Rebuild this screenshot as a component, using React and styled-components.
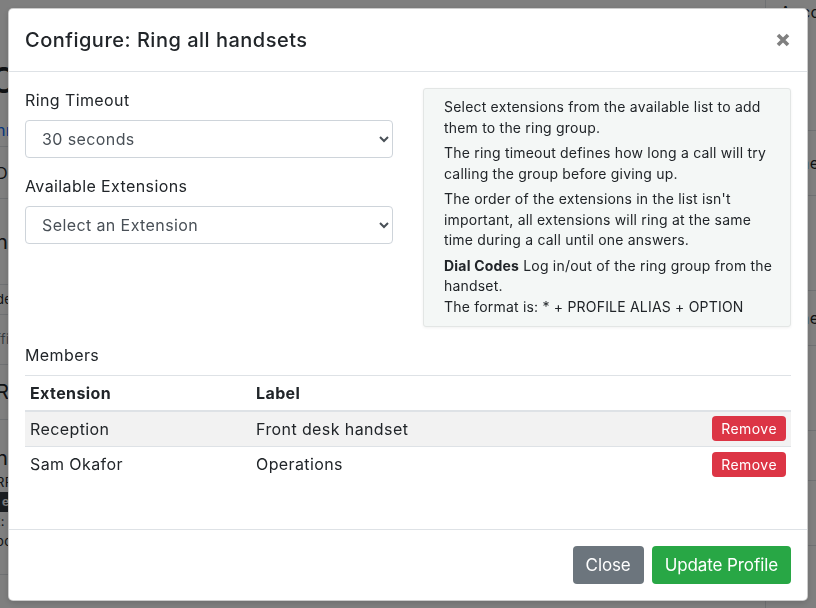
import React from "react";
import styled, { createGlobalStyle } from "styled-components";

const GlobalStyle = createGlobalStyle`
  html, body { margin: 0; padding: 0; }
  body {
    font-family: Inter, "Open Sans", "Liberation Sans", sans-serif;
    color: #212529;
    background: #fff;
    letter-spacing: 0.4px;
  }
  * { box-sizing: border-box; }
`;

/* ---------- background page ---------- */
const Page = styled.div`
  width: 816px;
  height: 608px;
  overflow: hidden;
  display: grid;
  grid-template-columns: 765px 1fr;
  background: #fff;
`;

const MainCol = styled.div`
  overflow: hidden;
  white-space: nowrap;
  padding-top: 58px;
  margin-left: -10px;
`;

const SideCol = styled.div`
  overflow: hidden;
  white-space: nowrap;
  border-left: 1px solid #dee2e6;
  padding-left: 10px;
`;

const BigHeading = styled.div`
  font-size: 36px;
  font-weight: 500;
  line-height: 44px;
  color: #212529;
`;

const PageLink = styled.div`
  color: #0d6efd;
  font-size: 16px;
  line-height: 24px;
  margin-top: 16px;
  margin-left: 6px;
`;

const PageRow = styled.div`
  border-top: 1px solid #dee2e6;
  display: flex;
  flex-direction: column;
  justify-content: center;
  height: ${(p) => p.$h}px;
  font-size: ${(p) => p.$size || 16}px;
  color: ${(p) => (p.$muted ? "#6c757d" : "#212529")};
  padding-left: ${(p) => p.$indent ?? 6}px;
  line-height: 1.5;
`;

const Badge = styled.span`
  display: inline-block;
  background: #343a40;
  color: #fff;
  font-size: 12px;
  font-weight: 700;
  padding: 1px 6px;
  border-radius: 3px;
  width: max-content;
`;

const TopLink = styled.div`
  display: flex;
  align-items: center;
  gap: 4px;
  height: 24px;
  font-size: 16px;
  color: #212529;
`;

/* ---------- modal ---------- */
const Backdrop = styled.div`
  position: fixed;
  inset: 0;
  background: rgba(0, 0, 0, 0.5);
`;

const ModalLayer = styled.div`
  position: fixed;
  inset: 0;
  display: flex;
  justify-content: center;
  align-items: flex-start;
  padding-top: 8px;
`;

const Modal = styled.div`
  width: 800px;
  background: #fff;
  border: 1px solid rgba(0, 0, 0, 0.2);
  border-radius: 5px;
  display: flex;
  flex-direction: column;
  box-shadow: 0 2px 6px rgba(0, 0, 0, 0.15);
`;

const Header = styled.div`
  display: flex;
  align-items: center;
  justify-content: space-between;
  padding: 16px;
  border-bottom: 1px solid #dee2e6;
`;

const Title = styled.h5`
  margin: 0;
  font-size: 20px;
  font-weight: 500;
  line-height: 30px;
  letter-spacing: 0.5px;
  color: #212529;
`;

const CloseX = styled.button`
  border: 0;
  background: none;
  padding: 0;
  margin-right: 1px;
  display: flex;
  color: #808080;
  cursor: pointer;
`;

const Body = styled.div`
  padding: 16px 16px 47px;
`;

const Columns = styled.div`
  display: grid;
  grid-template-columns: 1fr 1fr;
  column-gap: 30px;
`;

const FormGroup = styled.div`
  margin-bottom: 16px;
`;

const Label = styled.label`
  display: block;
  font-size: 16px;
  line-height: 24px;
  margin-bottom: 8px;
  color: #212529;
`;

const Select = styled.select`
  width: 100%;
  height: 38px;
  padding: 6px 8px 6px 12px;
  font-family: inherit;
  letter-spacing: 0.4px;
  font-size: 16px;
  color: #495057;
  background: #fff;
  border: 1px solid #ced4da;
  border-radius: 4px;
`;

const Help = styled.div`
  background: #f4f7f6;
  border: 1px solid #e3e6e5;
  border-radius: 3px;
  box-shadow: 0 1px 3px rgba(0, 0, 0, 0.06);
  padding: 8px 10px 9px 20px;
  font-size: 14px;
  line-height: 20.5px;
  letter-spacing: 0.2px;
  margin-bottom: 16px;
  color: #212529;
  p { margin: 0 0 5px; }
  p:last-child { margin-bottom: 0; }
`;

const SectionLabel = styled.div`
  font-size: 16px;
  line-height: 24px;
  margin-bottom: 8px;
`;

const Table = styled.table`
  width: 100%;
  border-collapse: collapse;
  font-size: 16px;
  line-height: 24px;
  th, td {
    padding: 4.8px 5px;
    border-top: 1px solid #dee2e6;
    text-align: left;
    vertical-align: middle;
  }
  th { font-weight: 700; border-bottom: 2px solid #dee2e6; }
`;

const Tr = styled.tr`
  background: ${(p) => (p.$striped ? "#f2f2f2" : "transparent")};
`;

const ActionCell = styled.td`
  text-align: right !important;
  width: 90px;
`;

const Btn = styled.button`
  font-family: inherit;
  border: 1px solid transparent;
  border-radius: 4px;
  color: #fff;
  cursor: pointer;
  background: ${(p) => p.$bg};
  font-size: ${(p) => (p.$small ? 14 : 17)}px;
  line-height: ${(p) => (p.$small ? 17 : 24)}px;
  letter-spacing: ${(p) => (p.$small ? 0.45 : -0.1)}px;
  padding: ${(p) => (p.$small ? "3px 8px" : "6px 12px")};
`;

const Footer = styled.div`
  display: flex;
  justify-content: flex-end;
  gap: 8px;
  padding: 16px 16px 16px;
  border-top: 1px solid #dee2e6;
`;

function XIcon() {
  return (
    <svg width="14" height="14" viewBox="0 0 14 14">
      <path
        d="M2 2 L12 12 M12 2 L2 12"
        stroke="currentColor"
        strokeWidth="3.6"
        strokeLinecap="butt"
      />
    </svg>
  );
}

function ChartIcon() {
  return (
    <svg width="13" height="12" viewBox="0 0 13 12">
      <path d="M1 0 V11 H13" stroke="#343a40" strokeWidth="2" fill="none" />
      <path d="M3 10 V5 L6 7 L9 2 L12 4 V10 Z" fill="#343a40" />
    </svg>
  );
}

const members = [
  { ext: "Reception", label: "Front desk handset" },
  { ext: "Sam Okafor", label: "Operations" },
];

export default function App() {
  return (
    <>
      <GlobalStyle />
      <Page>
        <MainCol>
          <BigHeading>OO Ring Groups</BigHeading>
          <PageLink>nmanage profiles</PageLink>
          <PageRow $h={52} style={{ marginTop: 4 }}>DDial plan</PageRow>
          <PageRow $h={86} $size={20}>hhandsets</PageRow>
          <PageRow $h={30} $size={13}>dedefault</PageRow>
          <PageRow $h={50} $size={13} $muted>ffirmware</PageRow>
          <PageRow $h={55} $size={20}>RReception</PageRow>
          <PageRow $h={155} $size={13}>
            <span style={{ fontSize: 20 }}>hhunt</span>
            <span>RRing all</span>
            <Badge>ecec</Badge>
            <span>t: timeout</span>
            <span>oon</span>
          </PageRow>
          <PageRow $h={40} />
        </MainCol>
        <SideCol>
          <TopLink>
            <ChartIcon />
            Account
          </TopLink>
          <PageRow $h={106} style={{ border: 0 }} />
          <PageRow $h={65} $indent={0}>name</PageRow>
          <PageRow $h={95} $indent={0}>
            <span>fo</span>
            <span style={{ fontSize: 13 }}>time</span>
          </PageRow>
          <PageRow $h={55} $indent={0}>name</PageRow>
          <PageRow $h={85} $indent={0}>
            <span>st</span>
            <span style={{ fontSize: 13 }}>26</span>
          </PageRow>
          <PageRow $h={50} $indent={0}>op</PageRow>
          <PageRow $h={65} $indent={0}>per</PageRow>
          <PageRow $h={60} $indent={0} />
        </SideCol>
      </Page>
      <Backdrop />
      <ModalLayer>
        <Modal role="dialog">
          <Header>
            <Title>Configure: Ring all handsets</Title>
            <CloseX aria-label="Close">
              <XIcon />
            </CloseX>
          </Header>
          <Body>
            <Columns>
              <div>
                <FormGroup>
                  <Label>Ring Timeout</Label>
                  <Select defaultValue="30">
                    <option value="15">15 seconds</option>
                    <option value="30">30 seconds</option>
                    <option value="60">60 seconds</option>
                  </Select>
                </FormGroup>
                <FormGroup>
                  <Label>Available Extensions</Label>
                  <Select defaultValue="">
                    <option value="">Select an Extension</option>
                  </Select>
                </FormGroup>
              </div>
              <Help>
                <p>Select extensions from the available list to add them to the ring group.</p>
                <p>The ring timeout defines how long a call will try calling the group before giving up.</p>
                <p>
                  The order of the extensions in the list isn't important, all extensions will ring at
                  the same time during a call until one answers.
                </p>
                <p>
                  <b>Dial Codes</b> Log in/out of the ring group from the handset.
                  <br />
                  The format is: * + PROFILE ALIAS + OPTION
                </p>
              </Help>
            </Columns>
            <SectionLabel>Members</SectionLabel>
            <Table>
              <thead>
                <tr>
                  <th style={{ width: 226 }}>Extension</th>
                  <th>Label</th>
                  <th></th>
                </tr>
              </thead>
              <tbody>
                {members.map((m, i) => (
                  <Tr key={m.ext} $striped={i % 2 === 0}>
                    <td>{m.ext}</td>
                    <td>{m.label}</td>
                    <ActionCell>
                      <Btn $small $bg="#dc3545">Remove</Btn>
                    </ActionCell>
                  </Tr>
                ))}
              </tbody>
            </Table>
          </Body>
          <Footer>
            <Btn $bg="#6c757d">Close</Btn>
            <Btn $bg="#28a745">Update Profile</Btn>
          </Footer>
        </Modal>
      </ModalLayer>
    </>
  );
}
